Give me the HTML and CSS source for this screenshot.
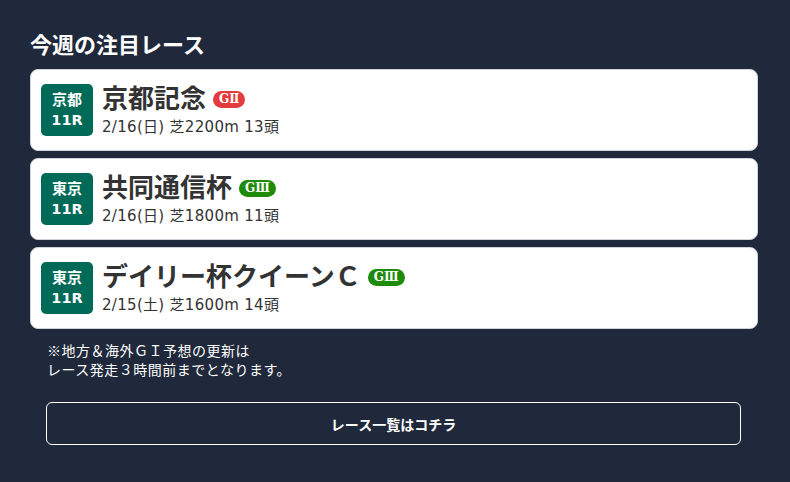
FILE: index.html
```html
<!DOCTYPE html>
<html lang="ja">
<head>
<meta charset="utf-8">
<link rel="stylesheet" href="styles.css">
</head>
<body>
<section class="featured">
  <h2 class="heading">今週の注目レース</h2>
  <ul class="races">
    <li class="race">
      <div class="venue"><span>京都</span><span class="num">11R</span></div>
      <div class="info">
        <div class="name-row"><span class="name">京都記念</span><span class="grade g2">GⅡ</span></div>
        <div class="meta">2/16(日) 芝2200m 13頭</div>
      </div>
    </li>
    <li class="race">
      <div class="venue"><span>東京</span><span class="num">11R</span></div>
      <div class="info">
        <div class="name-row"><span class="name">共同通信杯</span><span class="grade g3">GⅢ</span></div>
        <div class="meta">2/16(日) 芝1800m 11頭</div>
      </div>
    </li>
    <li class="race">
      <div class="venue"><span>東京</span><span class="num">11R</span></div>
      <div class="info">
        <div class="name-row"><span class="name">デイリー杯クイーンＣ</span><span class="grade g3">GⅢ</span></div>
        <div class="meta">2/15(土) 芝1600m 14頭</div>
      </div>
    </li>
  </ul>
  <p class="note">※地方＆海外ＧＩ予想の更新は<br>レース発走３時間前までとなります。</p>
  <a class="more" href="#">レース一覧はコチラ</a>
</section>
</body>
</html>
```
FILE: styles.css
```css
html, body {
  margin: 0;
  padding: 0;
  background: #1f293b;
}
body {
  font-family: "DejaVu Sans", "Noto Sans CJK JP", sans-serif;
  color: #fff;
}
.featured {
  padding: 31px 32px 36px 30px;
}
.heading {
  margin: 0 0 8px;
  font-size: 22px;
  font-weight: 700;
  line-height: 30px;
  color: #fff;
}
.races {
  list-style: none;
  margin: 0;
  padding: 0;
  display: flex;
  flex-direction: column;
  gap: 7px;
}
.race {
  display: flex;
  align-items: center;
  gap: 9px;
  background: #fff;
  border: 1px solid #d0d4da;
  border-radius: 8px;
  padding: 14px 10px;
  height: 52px;
}
.venue {
  width: 52px;
  height: 52px;
  flex: none;
  background: #006a58;
  border-radius: 5px;
  display: flex;
  flex-direction: column;
  align-items: center;
  justify-content: center;
  color: #fff;
  font-weight: 700;
  font-size: 15px;
  line-height: 20px;
}
.venue .num {
  font-size: 14.5px;
}
.info {
  display: flex;
  flex-direction: column;
  color: #333;
}
.name-row {
  display: flex;
  align-items: center;
  gap: 7px;
  height: 30px;
}
.name {
  font-size: 26px;
  font-weight: 700;
  line-height: 30px;
  color: #333;
}
.grade {
  display: inline-block;
  font-family: "DejaVu Serif", "Liberation Serif", serif;
  font-size: 12px;
  font-weight: 700;
  color: #fff;
  line-height: 17px;
  padding: 0 6px;
  border-radius: 9px;
  margin-top: 2px;
}
.g2 { background: #e23c3c; }
.g3 { background: #1e8a0a; }
.meta {
  font-size: 15px;
  line-height: 20px;
  letter-spacing: 0.3px;
  color: #333;
  margin-top: 3px;
}
.note {
  margin: 12px 0 0 17px;
  font-family: "Noto Sans CJK JP", sans-serif;
  font-size: 14px;
  line-height: 19px;
  letter-spacing: 0.5px;
  color: #fff;
}
.more {
  display: flex;
  align-items: center;
  justify-content: center;
  margin: 23px 17px 0 16px;
  height: 41px;
  border: 1px solid #fff;
  border-radius: 6px;
  color: #fff;
  font-size: 14px;
  font-weight: 700;
  text-decoration: none;
}
```
